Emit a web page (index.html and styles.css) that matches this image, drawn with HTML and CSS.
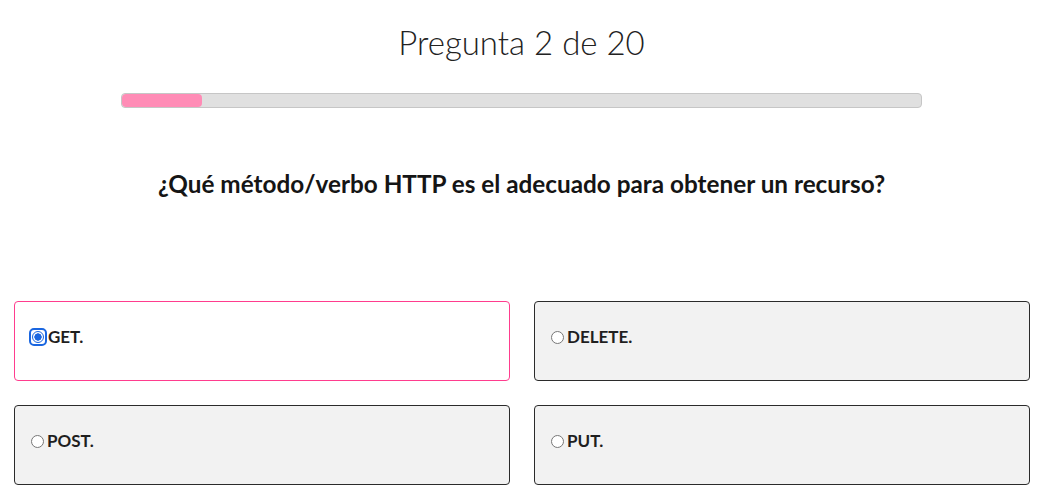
FILE: index.html
```html
<!DOCTYPE html>
<html lang="es">
<head>
<meta charset="utf-8">
<title>Pregunta 2 de 20</title>
<link rel="stylesheet" href="styles.css">
</head>
<body>
<main class="quiz">
  <h1 class="quiz-title">Pregunta 2 de 20</h1>
  <div class="progress"><div class="progress-fill" style="width: 10%"></div></div>
  <h2 class="question">¿Qué método/verbo HTTP es el adecuado para obtener un recurso?</h2>
  <div class="options">
    <label class="option selected"><span class="focus-ring"><input class="radio-checked" type="radio" name="q" checked></span><span class="option-text">GET.</span></label>
    <label class="option"><input type="radio" name="q"><span class="option-text">DELETE.</span></label>
    <label class="option"><input type="radio" name="q"><span class="option-text">POST.</span></label>
    <label class="option"><input type="radio" name="q"><span class="option-text">PUT.</span></label>
  </div>
</main>
</body>
</html>
```
FILE: styles.css
```css
html, body {
  margin: 0;
  padding: 0;
  background: #ffffff;
}
body {
  font-family: Lato, "Liberation Sans", sans-serif;
  color: #1f1f1f;
}
.quiz {
  width: 1027px;
  margin-left: 8px;
}
.quiz-title {
  margin: 23px 0 0;
  font-size: 33px;
  line-height: 39px;
  font-weight: 300;
  text-align: center;
  color: #222;
}
.progress {
  width: 799px;
  height: 13px;
  margin: 31px auto 0;
  background: #e0e0e0;
  border: 1px solid #c6c6c6;
  border-radius: 4px;
  overflow: hidden;
}
.progress-fill {
  height: 100%;
  background: #ff8cb6;
  border-radius: 4px;
}
.question {
  margin: 62px 0 0;
  font-size: 24.3px;
  line-height: 28px;
  font-weight: 700;
  text-align: center;
  color: #151515;
}
.options {
  display: grid;
  grid-template-columns: 496px 496px;
  column-gap: 24px;
  row-gap: 24px;
  margin: 103px 0 0 6px;
}
.option {
  box-sizing: border-box;
  height: 80px;
  display: flex;
  align-items: center;
  padding: 0 11px 8px;
  background: #f2f2f2;
  border: 1px solid #2b2b2b;
  border-radius: 4px;
  font-size: 17px;
  font-weight: 700;
  color: #1f1f1f;
}
.option input {
  width: 13px;
  height: 13px;
  margin: 0 3px 0 5px;
  flex: none;
}
.option.selected {
  background: #ffffff;
  border-color: #ff3d8e;
}
.focus-ring {
  display: inline-flex;
  align-items: center;
  justify-content: center;
  box-sizing: border-box;
  width: 18px;
  height: 18px;
  margin: 0 1px 0 3px;
  border: 2px solid #1a66e0;
  border-radius: 5px;
  background: #ffffff;
  flex: none;
}
.option .radio-checked {
  appearance: none;
  -webkit-appearance: none;
  box-sizing: border-box;
  width: 12px;
  height: 12px;
  margin: 0;
  border: 1.5px solid #1a66e0;
  border-radius: 50%;
  background: radial-gradient(circle, #1a66e0 0 3.4px, #ffffff 3.9px);
}
.option-text {
  line-height: 20px;
}
```
